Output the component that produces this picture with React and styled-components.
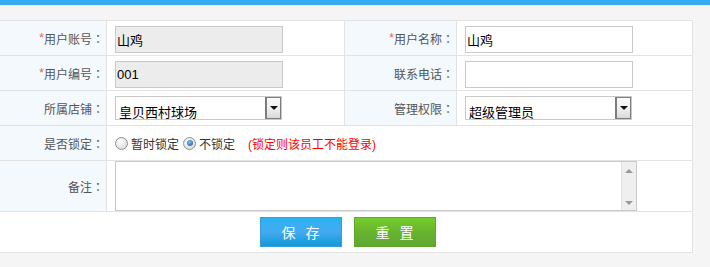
import styled, { createGlobalStyle } from "styled-components";

const GlobalStyle = createGlobalStyle`
  html, body {
    margin: 0;
    padding: 0;
    background: #f5f5f5;
    font-family: "Liberation Sans", "Noto Sans CJK SC", sans-serif;
    font-size: 12px;
  }
`;

const TopBar = styled.div`
  height: 5px;
  background: #35abf3;
`;

const Form = styled.div`
  margin-top: 15px;
  width: 693px;
  display: grid;
  grid-template-columns: 107px 238px 112px 236px;
  border-top: 1px solid #e3e3e3;
  background: #fff;
`;

const Cell = styled.div`
  box-sizing: border-box;
  height: ${(p) => p.$h || 35}px;
  border-right: 1px solid #e3e3e3;
  border-bottom: 1px solid #e3e3e3;
  display: flex;
  align-items: center;
  grid-column: ${(p) => (p.$span ? `span ${p.$span}` : "auto")};
`;

const LabelCell = styled(Cell)`
  background: #f3f9fd;
  justify-content: flex-end;
  padding-right: 2px;
  color: #555;
`;

const ValueCell = styled(Cell)`
  padding-left: 8px;
  color: #333;
`;

const ButtonCell = styled(Cell)`
  grid-column: span 4;
  justify-content: center;
  gap: 12px;
  padding-left: 3px;
`;

const Star = styled.span`
  color: #f2651d;
`;

const Colon = styled.span`
  font-family: "Noto Sans CJK TC", sans-serif;
  width: 12px;
  text-align: center;
`;

const Label = ({ star, children }) => (
  <>
    {star && <Star>*</Star>}
    {children}
    <Colon>：</Colon>
  </>
);

const TextInput = styled.input`
  box-sizing: border-box;
  width: 168px;
  height: 27px;
  margin-top: 2px;
  padding: 0 1px;
  border: 1px solid #c9c9c9;
  background: ${(p) => (p.readOnly ? "#ececec" : "#fff")};
  font-family: "Liberation Sans", "Noto Sans CJK SC", sans-serif;
  font-size: 13px;
  color: #000;
  outline: none;
`;

const SelectBox = styled.div`
  box-sizing: border-box;
  width: ${(p) => p.$w}px;
  height: 24px;
  border: 1px solid #c9c9c9;
  display: flex;
  background: #fff;
  overflow: hidden;
`;

const SelectText = styled.div`
  flex: 1;
  padding: 7px 0 0 3px;
  font-size: 13px;
  color: #000;
  line-height: 18px;
`;

const SelectArrow = styled.div`
  box-sizing: border-box;
  width: 17px;
  height: 24px;
  margin-top: -1px;
  margin-right: -1px;
  border: 2px solid #7d7d7d;
  background: linear-gradient(#fafafa, #f0f0f0 55%, #d8d8d8);
  display: flex;
  align-items: center;
  justify-content: center;

  &::after {
    content: "";
    border-left: 4px solid transparent;
    border-right: 4px solid transparent;
    border-top: 4px solid #111;
    margin-top: -1px;
  }
`;

const RadioLabel = styled.label`
  display: flex;
  align-items: center;
  gap: 3px;
  margin-right: 4px;
  color: #333;
`;

const RadioDot = styled.span`
  box-sizing: border-box;
  width: 13px;
  height: 13px;
  border-radius: 50%;
  border: 1px solid #8f8f8f;
  background: radial-gradient(circle at 40% 35%, #fff, #d2d2d2);
  display: flex;
  align-items: center;
  justify-content: center;

  &::after {
    content: "";
    display: ${(p) => (p.$on ? "block" : "none")};
    width: 6px;
    height: 6px;
    border-radius: 50%;
    background: radial-gradient(circle at 40% 35%, #7cc0f4, #134f9e);
  }
`;

const Hint = styled.span`
  color: #f00;
  margin-left: 9px;
`;

const NoteBox = styled.div`
  box-sizing: border-box;
  width: 522px;
  height: 50px;
  border: 1px solid #c9c9c9;
  display: flex;
  align-self: flex-start;
`;

const NoteArea = styled.textarea`
  flex: 1;
  border: none;
  resize: none;
  outline: none;
  overflow: hidden;
`;

const ScrollBar = styled.div`
  width: 15px;
  background: #efefef;
  border-left: 1px solid #e2e2e2;
  display: flex;
  flex-direction: column;
  justify-content: space-between;
  align-items: center;
  padding: 7px 0 5px;
  box-sizing: border-box;
`;

const Tri = styled.span`
  border-left: 4px solid transparent;
  border-right: 4px solid transparent;
  ${(p) => (p.$up ? "border-bottom" : "border-top")}: 4px solid #9a9a9a;
`;

const Button = styled.button`
  width: 82px;
  height: 30px;
  border: 1px solid ${(p) => (p.$green ? "#5ea62e" : "#3b9bd8")};
  background: ${(p) =>
    p.$green
      ? "linear-gradient(#75cd2a, #67b42f 50%, #5ea733)"
      : "linear-gradient(#2bb2f2, #45aaf0 50%, #2aa3e6 72%, #129ad9)"};
  color: #fff;
  font-family: "Liberation Sans", "Noto Sans CJK SC", sans-serif;
  font-size: 14px;
  letter-spacing: 10px;
  text-indent: 10px;
  padding: 0;
  cursor: pointer;
`;

export default function App() {
  return (
    <>
      <GlobalStyle />
      <TopBar />
      <Form>
        <LabelCell>
          <Label star>用户账号</Label>
        </LabelCell>
        <ValueCell>
          <TextInput readOnly defaultValue="山鸡" />
        </ValueCell>
        <LabelCell>
          <Label star>用户名称</Label>
        </LabelCell>
        <ValueCell>
          <TextInput defaultValue="山鸡" />
        </ValueCell>

        <LabelCell>
          <Label star>用户编号</Label>
        </LabelCell>
        <ValueCell>
          <TextInput readOnly defaultValue="001" />
        </ValueCell>
        <LabelCell>
          <Label>联系电话</Label>
        </LabelCell>
        <ValueCell>
          <TextInput defaultValue="" />
        </ValueCell>

        <LabelCell>
          <Label>所属店铺</Label>
        </LabelCell>
        <ValueCell>
          <SelectBox $w={167}>
            <SelectText>皇贝西村球场</SelectText>
            <SelectArrow />
          </SelectBox>
        </ValueCell>
        <LabelCell>
          <Label>管理权限</Label>
        </LabelCell>
        <ValueCell>
          <SelectBox $w={167}>
            <SelectText>超级管理员</SelectText>
            <SelectArrow />
          </SelectBox>
        </ValueCell>

        <LabelCell>
          <Label>是否锁定</Label>
        </LabelCell>
        <ValueCell $span={3}>
          <RadioLabel>
            <RadioDot />
            暂时锁定
          </RadioLabel>
          <RadioLabel>
            <RadioDot $on />
            不锁定
          </RadioLabel>
          <Hint>(锁定则该员工不能登录)</Hint>
        </ValueCell>

        <LabelCell $h={51}>
          <Label>备注</Label>
        </LabelCell>
        <ValueCell $span={3} $h={51}>
          <NoteBox>
            <NoteArea />
            <ScrollBar>
              <Tri $up />
              <Tri />
            </ScrollBar>
          </NoteBox>
        </ValueCell>

        <ButtonCell $h={41}>
          <Button>保存</Button>
          <Button $green>重置</Button>
        </ButtonCell>
      </Form>
    </>
  );
}
